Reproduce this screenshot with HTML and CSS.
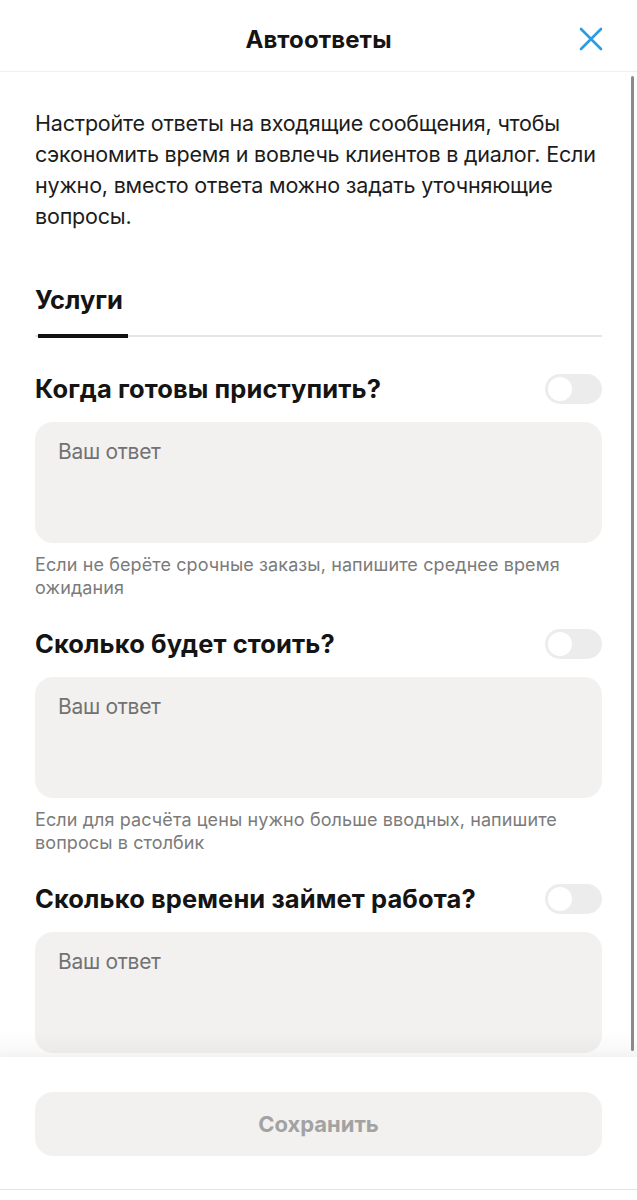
FILE: index.html
```html
<!DOCTYPE html>
<html lang="ru">
<head>
  <meta charset="UTF-8">
  <title>Автоответы</title>
  <link rel="stylesheet" href="styles.css">
</head>
<body>
  <div class="sheet">
    <header class="topbar">
      <h1 class="topbar-title">Автоответы</h1>
      <button class="close-btn" aria-label="Закрыть">
        <svg width="24" height="24" viewBox="0 0 24 24">
          <path d="M2 2 L22 22 M22 2 L2 22" stroke="#2b9be3" stroke-width="2.6" stroke-linecap="round" fill="none"/>
        </svg>
      </button>
    </header>

    <main class="content">
      <p class="intro">Настройте ответы на входящие сообщения, чтобы сэкономить время и вовлечь клиентов в диалог. Если нужно, вместо ответа можно задать уточняющие вопросы.</p>

      <div class="tabs">
        <div class="tab active">Услуги</div>
      </div>

      <!-- Questions -->
      <section class="question">
        <div class="question-head">
          <h2>Когда готовы приступить?</h2>
          <span class="toggle"><span class="knob"></span></span>
        </div>
        <div class="answer">Ваш ответ</div>
        <p class="hint">Если не берёте срочные заказы, напишите среднее время ожидания</p>
      </section>

      <section class="question">
        <div class="question-head">
          <h2>Сколько будет стоить?</h2>
          <span class="toggle"><span class="knob"></span></span>
        </div>
        <div class="answer">Ваш ответ</div>
        <p class="hint">Если для расчёта цены нужно больше вводных, напишите вопросы в столбик</p>
      </section>

      <section class="question">
        <div class="question-head">
          <h2>Сколько времени займет работа?</h2>
          <span class="toggle"><span class="knob"></span></span>
        </div>
        <div class="answer">Ваш ответ</div>
      </section>

      <div class="fade"></div>
      <div class="scrollbar"></div>
    </main>

    <footer class="footer">
      <button class="save-btn" disabled>Сохранить</button>
    </footer>
  </div>
</body>
</html>
```

FILE: styles.css
```css
* {
  box-sizing: border-box;
}

body {
  margin: 0;
  background-color: #fff;
  font-family: Inter, "Noto Sans", sans-serif;
  color: #141414;
}

.sheet {
  display: flex;
  flex-direction: column;
  height: 100vh;
}

.topbar {
  position: relative;
  display: flex;
  justify-content: center;
  align-items: center;
  height: 72px;
  padding-top: 8px;
  border-bottom: 1px solid #efefef;
  flex-shrink: 0;
}

.topbar-title {
  margin: 0;
  font-size: 24px;
  font-weight: 700;
  letter-spacing: 0.1px;
}

.close-btn {
  position: absolute;
  right: 34px;
  top: 27px;
  padding: 0;
  border: none;
  background: none;
  cursor: pointer;
}

.content {
  position: relative;
  flex: 1;
  overflow: hidden;
  padding: 36px 35px 0;
}

.intro {
  margin: 0;
  font-size: 21.5px;
  line-height: 31px;
  letter-spacing: -0.2px;
  color: #1c1c1c;
}

.tabs {
  margin-top: 52px;
  border-bottom: 2px solid #e6e6e6;
}

.tab {
  display: inline-block;
  padding-bottom: 20px;
  font-size: 25.5px;
  font-weight: 700;
  line-height: 31px;
  letter-spacing: 0;
  position: relative;
}

.tab.active::after {
  content: "";
  position: absolute;
  left: 3px;
  right: -5px;
  bottom: -3px;
  height: 4px;
  background-color: #111;
}

.tabs + .question {
  margin-top: 37px;
}

.question {
  margin-bottom: 30px;
}

.question-head {
  display: flex;
  justify-content: space-between;
  align-items: center;
}

.question-head h2 {
  margin: 0;
  font-size: 25.5px;
  font-weight: 700;
  line-height: 30px;
  letter-spacing: 0.1px;
}

.toggle {
  display: flex;
  align-items: center;
  width: 57px;
  height: 30px;
  padding: 0 3px;
  border-radius: 15px;
  background-color: #ececec;
}

.knob {
  width: 24px;
  height: 24px;
  border-radius: 50%;
  background-color: #fff;
}

.answer {
  margin-top: 18px;
  height: 121px;
  padding: 17px 23px;
  border-radius: 18px;
  background-color: #f2f1f0;
  font-size: 21px;
  line-height: 26px;
  letter-spacing: -0.3px;
  color: #727272;
}

.hint {
  margin: 10px 0 0;
  font-size: 18px;
  line-height: 23px;
  letter-spacing: 0.1px;
  color: #7b7b7b;
}

/* soft shadow where the list slides under the footer */
.fade {
  position: absolute;
  left: 0;
  right: 0;
  bottom: 0;
  height: 26px;
  background: linear-gradient(to bottom, rgba(0,0,0,0), rgba(0,0,0,0.035));
}

.scrollbar {
  position: absolute;
  right: 3px;
  top: 4px;
  width: 3px;
  height: 975px;
  border-radius: 2px;
  background-color: #8a8a8a;
}

.footer {
  flex-shrink: 0;
  height: 133px;
  padding: 35px 35px 0;
  border-bottom: 1px solid #e4e4e4;
  margin-bottom: 10px;
  box-shadow: 0 -3px 6px rgba(0,0,0,0.02);
}

.save-btn {
  width: 100%;
  height: 64px;
  border: none;
  border-radius: 18px;
  background-color: #f2f1f0;
  font-family: Inter, "Noto Sans", sans-serif;
  font-size: 22px;
  font-weight: 700;
  color: #a2a2a2;
  letter-spacing: 0;
}
```
